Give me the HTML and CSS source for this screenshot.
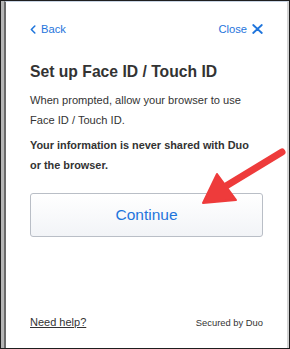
FILE: index.html
```html
<!DOCTYPE html>
<html>
<head>
<meta charset="utf-8">
<link rel="stylesheet" href="styles.css">
</head>
<body>
<div class="frame">
  <div class="backdrop"></div>
  <div class="window">
    <div class="topbar">
      <a class="nav back"><svg class="chev" viewBox="0 0 7 10" width="6" height="9"><path d="M5.6 1 L1.6 5 L5.6 9" fill="none" stroke="#1f75dc" stroke-width="1.8" stroke-linecap="round" stroke-linejoin="round"/></svg>Back</a>
      <a class="nav close">Close<svg class="x" viewBox="0 0 11 10" width="11" height="10"><path d="M1.2 1 L9.8 9 M9.8 1 L1.2 9" fill="none" stroke="#1f75dc" stroke-width="1.8" stroke-linecap="round"/></svg></a>
    </div>
    <h1 class="title">Set up Face ID / Touch ID</h1>
    <p class="text">When prompted, allow your browser to use Face ID / Touch ID.</p>
    <p class="text strong">Your information is never shared with Duo or the browser.</p>
    <button class="continue">Continue</button>
    <div class="spacer"></div>
    <div class="footer">
      <a class="help">Need help?</a>
      <span class="secured">Secured by Duo</span>
    </div>
  </div>
  <svg class="arrow" viewBox="0 0 290 349" width="290" height="349">
    <line x1="282" y1="152" x2="226" y2="186" stroke="#ee3b3b" stroke-width="7" stroke-linecap="round"/>
    <polygon points="203,203 217,174 236,200" fill="#ee3b3b" stroke="#ee3b3b" stroke-width="2" stroke-linejoin="round"/>
  </svg>
</div>
</body>
</html>
```

FILE: styles.css
```css
* { box-sizing: border-box; }
body { margin: 0; font-family: "Liberation Sans", Arial, Helvetica, sans-serif; }
.frame {
  position: relative;
  width: 290px;
  height: 349px;
  border: 1px solid #1e1e1e;
  display: flex;
  background: #fff;
}
.backdrop {
  width: 3px;
  background: #b5b5b5;
}
.window {
  flex: 1;
  border-left: 2px solid #6a6a6a;
  border-right: 2px solid #d4d4d4;
  border-top: 1px solid #c8d4e4;
  background: #fff;
  display: flex;
  flex-direction: column;
  padding: 0 24px 0 24px;
}
.topbar {
  display: flex;
  justify-content: space-between;
  align-items: center;
  margin-top: 20px;
  height: 14px;
}
.nav {
  color: #1f75dc;
  font-size: 11.2px;
  display: flex;
  align-items: center;
}
.chev { margin-right: 5px; }
.x { margin-left: 5px; }
.title {
  margin: 25px 0 0 0;
  font-size: 15.7px;
  font-weight: bold;
  color: #333;
  line-height: 22px;
}
.text {
  margin: 7px 0 0 0;
  max-width: 226px;
  font-size: 11.1px;
  line-height: 20px;
  color: #333;
}
.strong { font-weight: bold; font-size: 10.9px; margin-top: 5px; }
.continue {
  margin-top: 18px;
  height: 44px;
  width: 100%;
  border: 1px solid #b9bec6;
  border-radius: 3px;
  background: linear-gradient(#ffffff, #f2f4f7);
  color: #1f75dc;
  font-family: "Liberation Sans", Arial, sans-serif;
  font-size: 15.5px;
}
.spacer { flex: 1; }
.footer {
  display: flex;
  justify-content: space-between;
  align-items: baseline;
  margin-bottom: 20px;
}
.help {
  font-size: 11px;
  color: #333;
  text-decoration: underline;
}
.secured {
  font-size: 9.4px;
  color: #333;
}
.arrow {
  position: absolute;
  left: -1px;
  top: -1px;
  pointer-events: none;
}
```
